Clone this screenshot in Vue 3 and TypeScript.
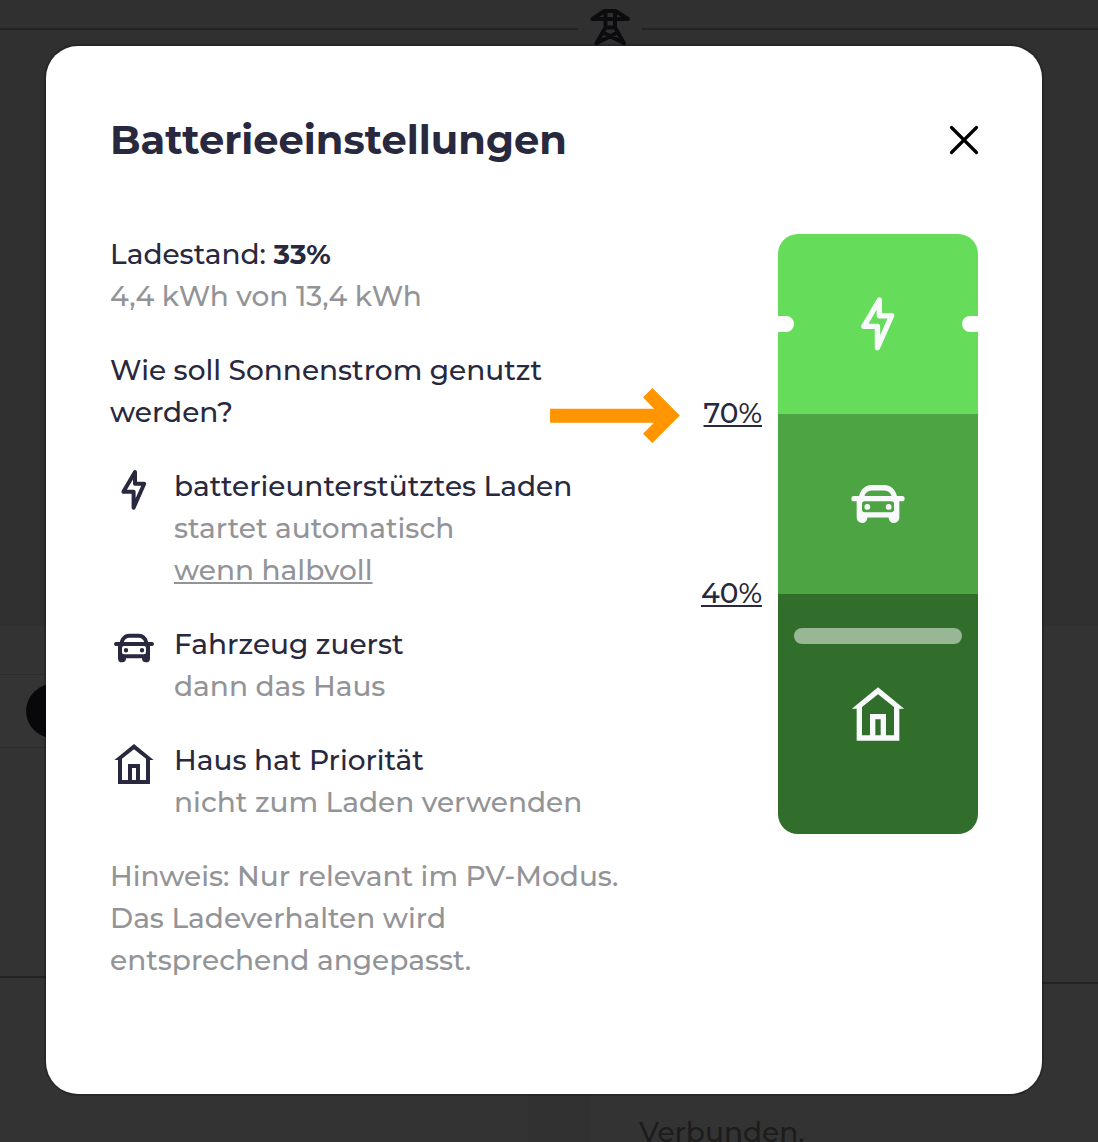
<script setup lang="ts">
type IconName = 'bolt' | 'car' | 'house'
interface Row { text: string; muted?: boolean; link?: boolean }
interface Usage { icon: IconName; rows: Row[] }

const icons: Record<IconName, string> = {
  bolt: 'M12.5 3 6.700 12.900h5.100v8L17.100 8.900h-4.600z',
  car: 'M6.9 9C7.3 7.7 8.3 6.9 9.6 6.9h4.8c1.3 0 2.3.8 2.7 2.1zM3 9h1.900c.6-2.500 2.400-4.100 4.700-4.100h4.800c2.300 0 4.100 1.600 4.700 4.100H21a1 1 0 0 1 0 2H20v6.200a2 2 0 0 1-4-.1H8a2 2 0 0 1-4 .1V11H3a1 1 0 0 1 0-2zM7 11a1 1 0 0 0-1 1v2.100a1 1 0 0 0 1 1h10a1 1 0 0 0 1-1V12a1 1 0 0 0-1-1zM9.100 13.100a1.100 1.100 0 1 1-2.200 0 1.100 1.100 0 0 1 2.200 0zM17.100 13.100a1.100 1.100 0 1 1-2.200 0 1.100 1.100 0 0 1 2.200 0z',
  house: 'M12 2l9.800 8H20v12H4V10H2.200zM12 4.6 6 9.4V20h3v-8h6v8h3V9.4zM11 14v6h2v-6z',
}

const usages: Usage[] = [
  { icon: 'bolt', rows: [
    { text: 'batterieunterstütztes Laden' },
    { text: 'startet automatisch', muted: true },
    { text: 'wenn halbvoll', muted: true, link: true },
  ] },
  { icon: 'car', rows: [
    { text: 'Fahrzeug zuerst' },
    { text: 'dann das Haus', muted: true },
  ] },
  { icon: 'house', rows: [
    { text: 'Haus hat Priorität' },
    { text: 'nicht zum Laden verwenden', muted: true },
  ] },
]

const question = ['Wie soll Sonnenstrom genutzt', 'werden?']
const hint = ['Hinweis: Nur relevant im PV-Modus.', 'Das Ladeverhalten wird', 'entsprechend angepasst.']

const segments: { icon: IconName; share: number }[] = [
  { icon: 'bolt', share: 30 },
  { icon: 'car', share: 30 },
  { icon: 'house', share: 40 },
]
</script>

<template>
  <div class="page">
    <div class="lower"></div>
    <div class="rule top-left"></div>
    <div class="rule top-right"></div>
    <svg class="pylon" width="44" height="40" viewBox="0 0 44 40" fill="none" stroke="#0c0c0e" stroke-width="4" stroke-linejoin="round" stroke-linecap="round">
      <path d="M16.500 3h11L40 11H4.500zM17.500 3v16.500L8.500 35.300M27 3v16.500l9 15.800M17.500 19.500H27M15 24.500l21 10.800M29.500 24.500L8.500 35.300" />
    </svg>
    <div class="band"></div>
    <div class="knob"></div>
    <div class="rule low-left"></div>
    <div class="rule low-right"></div>
    <div class="column"></div>
    <div class="status">Verbunden.</div>

    <main class="modal">
      <header>
        <h1>Batterieeinstellungen</h1>
        <svg class="close" width="30" height="30" viewBox="0 0 30 30" fill="none" stroke="#000" stroke-width="3.2" stroke-linecap="round"><path d="M2.500 2.500l25 25M27.500 2.500l-25 25" /></svg>
      </header>
      <div class="body">
        <section class="info">
          <div>
            <p>Ladestand: <b>33%</b></p>
            <p class="muted">4,4 kWh von 13,4 kWh</p>
          </div>
          <div>
            <p v-for="line in question" :key="line">{{ line }}</p>
          </div>
          <div v-for="u in usages" :key="u.icon" class="usage">
            <svg class="icon" :class="u.icon" width="48" height="48" viewBox="0 0 24 24"><path :d="icons[u.icon]" /></svg>
            <div>
              <p v-for="r in u.rows" :key="r.text" :class="{ muted: r.muted }"><span :class="{ link: r.link }">{{ r.text }}</span></p>
            </div>
          </div>
          <div class="muted">
            <p v-for="line in hint" :key="line">{{ line }}</p>
          </div>
        </section>
        <section class="gauge">
          <div class="labels">
            <span class="link">70%</span>
            <span class="link">40%</span>
          </div>
          <div class="battery">
            <div v-for="s in segments" :key="s.icon" class="segment" :class="'seg-' + s.icon" :style="{ height: s.share + '%' }">
              <svg class="icon light" :class="s.icon" width="64" height="64" viewBox="0 0 24 24"><path :d="icons[s.icon]" /></svg>
            </div>
            <i class="notch left"></i>
            <i class="notch right"></i>
            <i class="level"></i>
          </div>
        </section>
      </div>
      <svg class="arrow" width="130" height="56" viewBox="0 0 130 56" fill="#ff9500"><path d="M0 21.700h104L93 10.300l9.400-9.300 27.400 27.500L102.400 56 93 46.700 104 35.700H0z" /></svg>
    </main>
  </div>
</template>

<style>
body { margin: 0; overflow: hidden; }
</style>

<style scoped>
.page {
  position: relative;
  box-sizing: border-box;
  width: 1098px;
  height: 1142px;
  padding: 46px;
  overflow: hidden;
  background: #303030;
  font: 500 28px/42px Montserrat, Inter, sans-serif;
  color: #28293e;
}
.lower { position: absolute; left: 0; right: 0; top: 626px; bottom: 0; background: #333; }
.rule { position: absolute; height: 2px; background: #232323; }
.top-left { left: 0; width: 578px; top: 28px; }
.top-right { left: 642px; right: 0; top: 28px; }
.low-left { left: 0; width: 46px; top: 976px; }
.low-right { right: 0; width: 56px; top: 982px; }
.pylon { position: absolute; left: 588px; top: 8px; }
.band { position: absolute; left: 0; width: 46px; top: 674px; height: 72px; border: solid #2c2c2c; border-width: 1px 0; background: #343434; }
.knob { position: absolute; left: 26px; top: 684px; width: 54px; height: 54px; border-radius: 50%; background: #08080b; }
.column { position: absolute; left: 528px; width: 63px; top: 1090px; bottom: 0; background: #313131; }
.status { position: absolute; left: 639px; top: 1111px; color: #1c1c1c; }
.modal {
  position: relative;
  box-sizing: border-box;
  width: 996px;
  height: 1048px;
  padding: 64px;
  border-radius: 32px;
  background: #fff;
  box-shadow: 0 0 0 2px rgba(0, 0, 0, 0.2);
}
header { display: flex; justify-content: space-between; align-items: center; height: 60px; margin-bottom: 64px; }
h1 { margin: 0; font-size: 40px; line-height: 60px; font-weight: 700; }
.close { margin-right: -1px; }
.body { display: flex; justify-content: space-between; }
.info { display: flex; flex-direction: column; gap: 32px; margin-top: -1px; }
p { margin: 0; white-space: pre; }
b { font-weight: 700; }
.muted { color: #939498; }
.link { text-decoration: underline; text-decoration-thickness: 2px; text-underline-offset: 2px; text-decoration-skip-ink: none; }
.usage { display: flex; gap: 16px; }
.usage .icon { margin-top: 1px; }
.icon { display: block; fill: currentColor; fill-rule: evenodd; flex: none; }
.icon.bolt { fill: none; stroke: currentColor; stroke-width: 2; stroke-linejoin: round; }
.light { color: #f8f9fb; }
.gauge { display: flex; gap: 16px; }
.labels { display: flex; flex-direction: column; align-items: flex-end; padding-top: 158px; gap: 138px; }
.battery { position: relative; width: 200px; height: 600px; border-radius: 20px; overflow: hidden; }
.segment { display: flex; align-items: center; justify-content: center; }
.seg-bolt { background: #66dc5b; }
.seg-car { background: #4ca443; }
.seg-house { background: #316e2b; }
.notch { position: absolute; top: 82px; width: 16px; height: 16px; background: #fff; }
.notch.left { left: 0; border-radius: 0 8px 8px 0; }
.notch.right { right: 0; border-radius: 8px 0 0 8px; }
.level { position: absolute; left: 16px; right: 16px; top: 394px; height: 16px; border-radius: 8px; background: rgba(255, 255, 255, 0.5); }
.arrow { position: absolute; left: 504px; top: 341px; }
</style>
